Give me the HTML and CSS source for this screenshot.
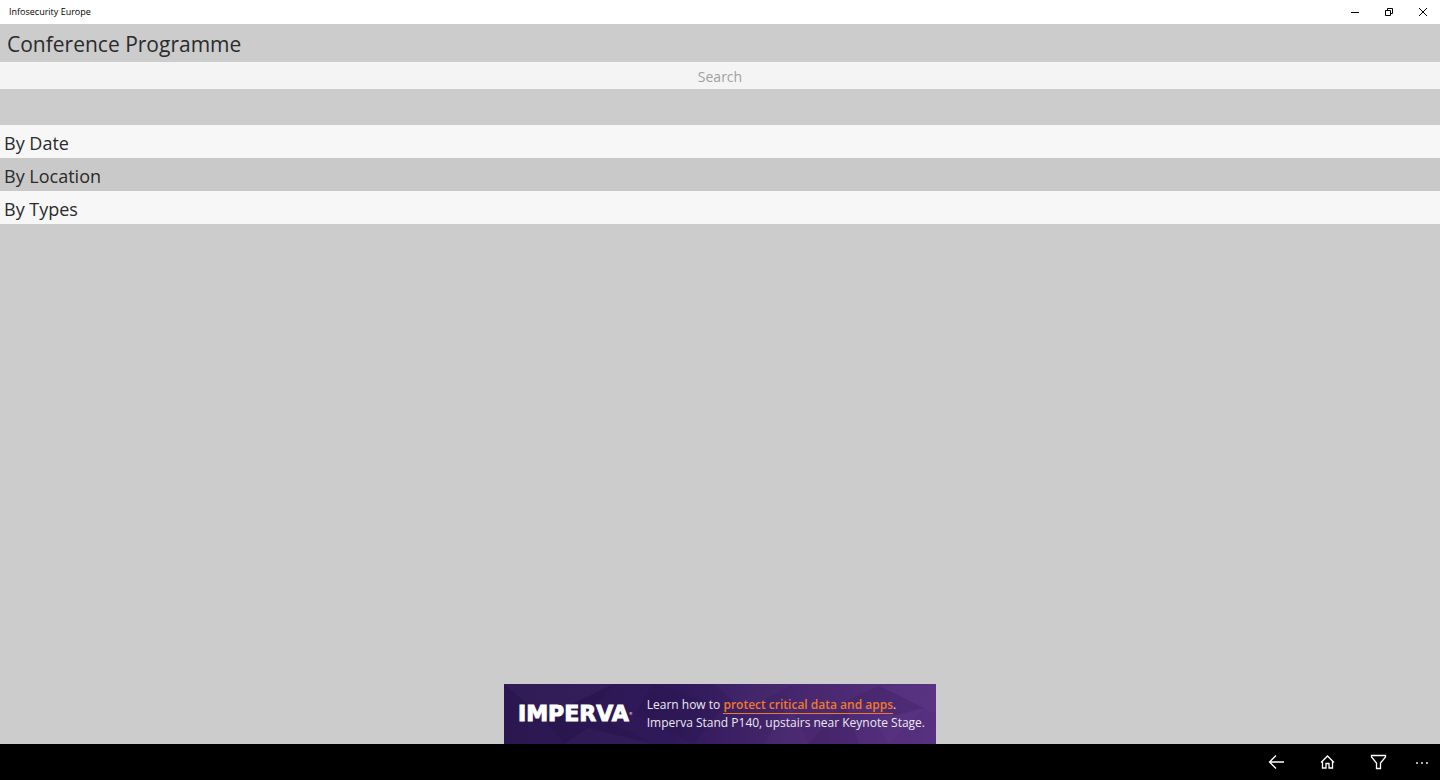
FILE: index.html
```html
<!DOCTYPE html>
<html lang="en">
<head>
  <meta charset="UTF-8" />
  <meta name="viewport" content="width=device-width, initial-scale=1.0" />
  <title>Infosecurity Europe</title>
  <link rel="stylesheet" href="styles.css">
</head>
<body>
  <!-- Window title bar -->
  <header class="title-bar">
    <span class="app-name">Infosecurity Europe</span>
    <div class="window-buttons">
      <button type="button" aria-label="Minimize">
        <svg width="10" height="10" viewBox="0 0 10 10"><path d="M1 5.5h8" /></svg>
      </button>
      <button type="button" aria-label="Restore">
        <svg width="10" height="10" viewBox="0 0 10 10"><path d="M1.5 3.5h5v5h-5zM3.5 3V1.5h5v5H7" /></svg>
      </button>
      <button type="button" aria-label="Close">
        <svg width="10" height="10" viewBox="0 0 10 10"><path d="M1 1l8 8M9 1l-8 8" /></svg>
      </button>
    </div>
  </header>

  <main class="content">
    <h1>Conference Programme</h1>
    <input class="search" type="search" placeholder="Search" aria-label="Search">

    <nav class="menu">
      <a href="#date">By Date</a>
      <a href="#location">By Location</a>
      <a href="#types">By Types</a>
    </nav>

    <!-- Sponsor banner -->
    <aside class="banner">
      <svg class="banner-bg" viewBox="0 0 432 60" preserveAspectRatio="none" aria-hidden="true">
        <path class="light" d="M0 0h110L40 34z" />
        <path class="dark" d="M110 0L85 28l65 32H60L40 34z" />
        <path class="light" d="M60 60l24-16 66 16z" />
        <path class="dark" d="M150 0l70 22-30 38-60-30z" />
        <path class="light" d="M210 0h80l-50 26z" />
        <path class="dark" d="M340 18l35-16 45 22-30 8-20-10z" />
        <path class="light" d="M420 24l-35 36-15-26z" />
        <path class="light" d="M260 60l25-42 20 42z" />
        <path class="dark" d="M305 60l35-42 15 42z" />
        <path class="light" d="M375 2l57-2v30z" />
      </svg>
      <div class="brand">IMPERVA<sup>®</sup></div>
      <p>Learn how to <a href="#sponsor">protect critical data and apps</a>.<br>Imperva Stand P140, upstairs near Keynote Stage.</p>
    </aside>
  </main>

  <!-- App bar -->
  <footer class="app-bar">
    <button type="button" aria-label="Back">
      <svg width="17" height="16" viewBox="0 0 17 16"><path d="M16 8H1.5M8 1.5L1.5 8 8 14.5" /></svg>
    </button>
    <button type="button" aria-label="Home">
      <svg width="17" height="16" viewBox="0 0 17 16"><path d="M2 8.5L8.5 2 15 8.5M3.5 7.5V14H7V9.5h3V14h3.5V7.5" /></svg>
    </button>
    <button type="button" aria-label="Filter">
      <svg width="17" height="16" viewBox="0 0 17 16"><path d="M1.5 1.5h14V3l-5 6v5.5h-4V9l-5-6z" /></svg>
    </button>
    <button type="button" class="more" aria-label="More">
      <svg width="14" height="16" viewBox="0 0 14 16"><circle cx="2" cy="9" r="0.9" /><circle cx="7" cy="9" r="0.9" /><circle cx="12" cy="9" r="0.9" /></svg>
    </button>
  </footer>
</body>
</html>
```
FILE: styles.css
```css
* {
  box-sizing: border-box;
}
body {
  margin: 0;
  min-height: 100vh;
  display: flex;
  flex-direction: column;
  background: #cccccc;
  color: #2b2b2b;
  font-family: "Segoe UI", "Open Sans", sans-serif;
}
button {
  display: flex;
  align-items: center;
  justify-content: center;
  padding: 0;
  border: none;
  background: none;
  cursor: pointer;
}
svg {
  fill: none;
  stroke: currentColor;
}

/* Title bar */
.title-bar {
  display: flex;
  justify-content: space-between;
  height: 24px;
  padding-left: 9px;
  background: #ffffff;
  color: #000000;
}
.app-name {
  font-size: 9px;
  line-height: 24px;
}
.window-buttons {
  display: flex;
}
.window-buttons button {
  width: 34px;
  color: #000000;
}

/* Page */
.content {
  flex: 1;
  display: flex;
  flex-direction: column;
}
h1 {
  margin: 0;
  padding: 0 7px;
  font-size: 21px;
  font-weight: 400;
  line-height: 40px;
  height: 38px;
}
.search {
  width: 100%;
  height: 27px;
  padding: 2px 0 0;
  border: none;
  outline: none;
  background: #f4f4f4;
  color: #2b2b2b;
  font-family: inherit;
  font-size: 14px;
  text-align: center;
  appearance: none;
}
.search::-webkit-search-cancel-button {
  display: none;
}
.search::placeholder {
  color: #a0a0a0;
}
.menu {
  display: flex;
  flex-direction: column;
  margin-top: 36px;
}
.menu a {
  padding: 2px 4px 0;
  height: 33px;
  font-size: 18px;
  line-height: 32px;
  color: inherit;
  text-decoration: none;
}
.menu a:nth-child(odd) {
  background: #f7f7f7;
}
.menu a:nth-child(even) {
  background: #c9c9c9;
}

/* Banner */
.banner {
  position: relative;
  display: flex;
  align-items: center;
  gap: 14px;
  width: 432px;
  max-width: 100%;
  height: 60px;
  margin: auto auto 0;
  padding-left: 14px;
  background: linear-gradient(100deg, #2b174f 0%, #30195a 40%, #49286f 70%, #583182 100%);
  color: #ece8f2;
  white-space: nowrap;
}
.banner-bg {
  position: absolute;
  inset: 0;
  width: 100%;
  height: 100%;
  stroke: none;
}
.light {
  fill: rgba(130, 85, 170, 0.08);
}
.dark {
  fill: rgba(20, 5, 50, 0.1);
}
.brand,
.banner p {
  position: relative;
}
.brand {
  color: #ffffff;
  font-family: "DejaVu Sans", sans-serif;
  font-size: 22px;
  font-weight: 700;
  line-height: 24px;
  -webkit-text-stroke: 1px #ffffff;
}
.brand sup {
  font-size: 4px;
  font-weight: 400;
  vertical-align: top;
  -webkit-text-stroke: 0;
}
.banner p {
  margin: 0;
  font-family: "Open Sans", sans-serif;
  font-size: 12px;
  line-height: 18px;
}
.banner a {
  color: #ef7a2b;
  font-weight: 600;
  text-decoration: none;
  border-bottom: 1px solid #ef7a2b;
}

/* App bar */
.app-bar {
  display: flex;
  justify-content: flex-end;
  height: 36px;
  background: #000000;
}
.app-bar button {
  width: 51px;
  color: #ffffff;
}
.app-bar path {
  stroke-width: 1.3;
}
.app-bar .more {
  width: 36px;
}
.app-bar circle {
  fill: currentColor;
  stroke: none;
}
```
